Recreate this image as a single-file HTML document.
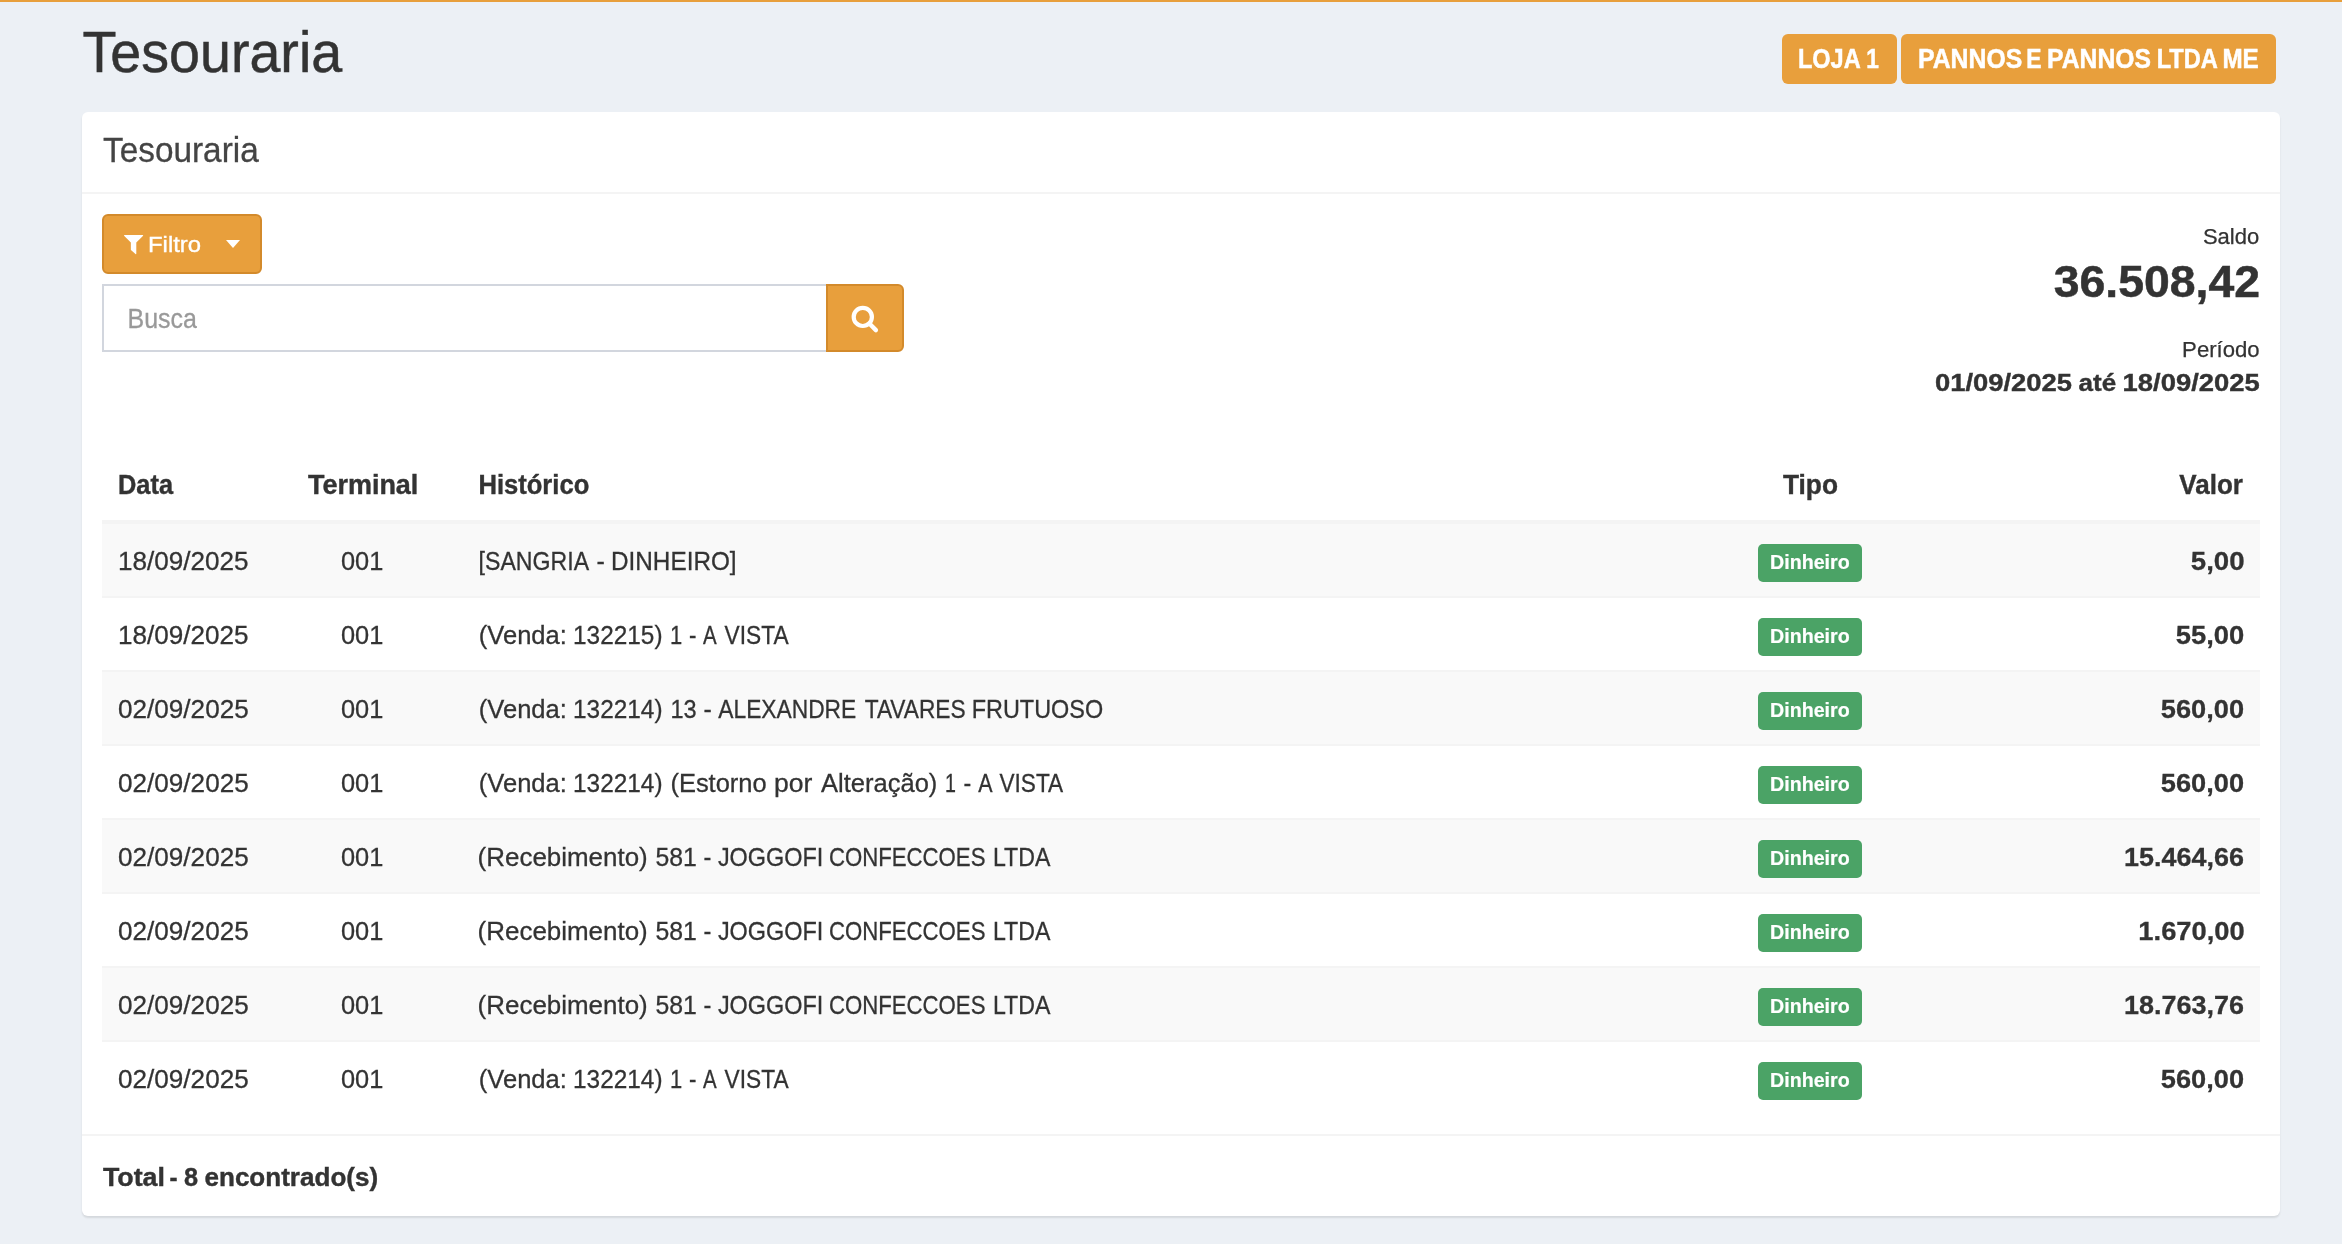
<!DOCTYPE html>
<html lang="pt-br"><head><meta charset="utf-8"><title>Tesouraria</title>
<style>
*{box-sizing:border-box}
html,body{margin:0;padding:0}
body{width:2342px;height:1244px;overflow:hidden;background:#ecf0f5;color:#333;
 font-family:"Liberation Sans",sans-serif;font-size:26.5px;position:relative}
.page{position:absolute;left:0;top:0;width:2342px;height:1244px;will-change:transform}
.sx{display:inline-block;white-space:nowrap}
.topbar{position:absolute;left:0;top:0;width:2342px;height:2px;background:#e89f3c}
h1.page-title{-webkit-text-stroke:0.5px #333;position:absolute;left:82px;top:17px;margin:0;font-weight:400;font-size:58px;line-height:70px;color:#333}
.labels{position:absolute;top:34px;left:1782px;height:50px;white-space:nowrap}
.label{position:absolute;top:0;height:50px;border-radius:6px;-webkit-text-stroke:0.5px #fff;background:#e89f3c;color:#fff;font-weight:700;
 font-size:27.5px;line-height:50px;text-align:center}
.card{position:absolute;left:82px;top:112px;width:2198px;height:1104px;background:#fff;border-radius:6px;
 box-shadow:0 2px 2px rgba(0,0,0,0.1)}
.card-header{position:absolute;left:0;top:0;width:100%;height:82px;border-bottom:2px solid #f4f4f4}
.card-header h3{-webkit-text-stroke:0.3px #444;position:absolute;left:20px;top:14px;margin:0;font-weight:400;font-size:34.5px;line-height:48px;color:#444}
.btn-filtro{position:absolute;left:20px;top:102px;width:160px;height:60px;background:#e89f3c;border:2px solid #d38a2b;
 border-radius:6px;color:#fff;font-size:22.5px;line-height:56px}
.btn-filtro svg.funnel{position:absolute;left:20px;top:18.9px}
.btn-filtro .txt{position:absolute;left:45px;top:1px;-webkit-text-stroke:0.35px #fff}
.btn-filtro .caret{position:absolute;left:122px;top:24px;width:0;height:0;border-left:7.5px solid transparent;border-right:7.5px solid transparent;border-top:8px solid #fff}
.search{position:absolute;left:20px;top:172px;width:802px;height:68px}
.search .input{position:absolute;left:0;top:0;width:726px;height:68px;border:2px solid #d2d6de;border-right:0;background:#fff;
 color:#999;-webkit-text-stroke:0.3px #999;font-size:27.5px;line-height:66px;padding-left:24px}
.search .btn{position:absolute;left:724px;top:0;width:78px;height:68px;background:#e89f3c;border:2px solid #d38a2b;
 border-radius:0 6px 6px 0}
.search .btn svg{position:absolute;left:22px;top:18px}
.summary{position:absolute;right:20px;top:102px;width:500px;text-align:right}
.summary div{position:absolute;right:0;white-space:nowrap}
.summary .l1{-webkit-text-stroke:0.25px #333;top:10px;font-size:21.2px;line-height:26px}
.summary .v1{-webkit-text-stroke:0.5px #333;top:41px;font-size:44.4px;line-height:54px;font-weight:700}
.summary .l2{-webkit-text-stroke:0.25px #333;top:123px;font-size:21.2px;line-height:26px}
.summary .v2{-webkit-text-stroke:0.4px #333;top:154px;font-size:24.8px;line-height:30px;font-weight:700}
table{position:absolute;left:20px;top:336px;width:2158px;border-collapse:separate;border-spacing:0;table-layout:fixed}
th{-webkit-text-stroke:0.4px #333;height:76px;border-bottom:4px solid #f4f4f4;font-weight:700;font-size:27.2px;padding:2px 16px 0;text-align:left;vertical-align:middle;line-height:40px}
td{-webkit-text-stroke:0.3px #333;height:74px;border-top:2px solid #f4f4f4;padding:1px 16px 0;vertical-align:middle;line-height:40px;font-size:26.5px;white-space:nowrap}
tbody tr:first-child td{height:72px;border-top:0}
tbody tr:nth-child(odd) td{background:#f9f9f9}
.c{text-align:center} .r{text-align:right}
th.c,td.c{text-align:center} th.r,td.r{text-align:right}
td.r{font-weight:700;-webkit-text-stroke:0.3px #333}
.badge{-webkit-text-stroke:0.2px #fff;display:inline-block;width:104px;height:38px;border-radius:5px;background:#4ba366;color:#fff;font-weight:700;
 font-size:20.4px;line-height:37px;text-align:center;vertical-align:middle;position:relative;top:1px}
.card-footer{-webkit-text-stroke:0.4px #333;position:absolute;left:0;top:1022px;width:100%;height:82px;border-top:2px solid #f4f4f4;
 font-weight:700;font-size:26px;line-height:40px;padding:21px 20px 0}
</style></head><body>
<div class="page">
<div class="topbar"></div>
<h1 class="page-title"><span class="sx" id="pt" style="transform:translate(0.5px,0.0px) scaleX(0.9589);transform-origin:0 50%">Tesouraria</span></h1>
<div class="labels"><span class="label" style="left:0;width:115px"><span class="sx" id="lab1w0" style="transform:translate(6.9px,0.0px) scaleX(0.8567);transform-origin:0 50%">LOJA</span> <span class="sx" id="lab1w1" style="transform:translate(-5.7px,0.0px) scaleX(0.8245);transform-origin:0 50%">1</span></span><span class="label" style="left:119px;width:375px"><span class="sx" id="lab2w0" style="transform:translate(17.0px,0.0px) scaleX(0.9017);transform-origin:0 50%">PANNOS</span> <span class="sx" id="lab2w1" style="transform:translate(2.2px,0.0px) scaleX(0.8306);transform-origin:0 50%">E</span> <span class="sx" id="lab2w2" style="transform:translate(-2.9px,0.0px) scaleX(0.8975);transform-origin:0 50%">PANNOS</span> <span class="sx" id="lab2w3" style="transform:translate(-17.3px,0.0px) scaleX(0.8589);transform-origin:0 50%">LTDA</span> <span class="sx" id="lab2w4" style="transform:translate(-29.6px,0.0px) scaleX(0.8810);transform-origin:0 50%">ME</span></span></div>
<section class="card">
<div class="card-header"><h3><span class="sx" id="bt" style="transform:translate(1.0px,0.0px) scaleX(0.9669);transform-origin:0 50%">Tesouraria</span></h3></div>
<div class="btn-filtro"><svg class="funnel" width="20" height="20" viewBox="0 0 20 20"><path d="M0.7 0H18.5Q19.7 0 18.9 1L12.3 7.6V18.5Q12.3 19.5 11.5 18.9L7.2 15.3Q6.85 15 6.85 14.5V7.6L0.3 1Q-0.5 0 0.7 0Z" fill="#fff"/></svg><span class="txt"><span class="sx" id="filtro" style="transform:translate(-1.0px,0.0px) scaleX(1.0611);transform-origin:0 50%">Filtro</span></span><span class="caret"></span></div>
<div class="search"><div class="input"><span class="sx" id="busca" style="transform:translate(-0.5px,0.0px) scaleX(0.9083);transform-origin:0 50%">Busca</span></div><div class="btn"><svg width="30" height="30" viewBox="0 0 30 30"><circle cx="12.8" cy="12.9" r="9.1" fill="none" stroke="#fff" stroke-width="4.2"/><path d="M19.6 19.8L25.9 26.1" stroke="#fff" stroke-width="4.4" stroke-linecap="round"/></svg></div></div>
<div class="summary"><div class="l1"><span class="sx" id="saldo" style="transform:translate(-1.0px,0.0px) scaleX(1.0392);transform-origin:100% 50%">Saldo</span></div><div class="v1"><span class="sx" id="saldov" style="transform:translate(-0.5px,0.0px) scaleX(1.0447);transform-origin:100% 50%">36.508,42</span></div><div class="l2"><span class="sx" id="periodo" style="transform:translate(-0.6px,0.0px) scaleX(1.0442);transform-origin:100% 50%">Período</span></div><div class="v2"><span class="sx" id="periodovw0" style="transform:translate(-27.0px,0.0px) scaleX(1.1036);transform-origin:0 50%">01/09/2025</span> <span class="sx" id="periodovw1" style="transform:translate(-14.4px,0.0px) scaleX(1.0498);transform-origin:0 50%">até</span> <span class="sx" id="periodovw2" style="transform:translate(-13.4px,0.0px) scaleX(1.1045);transform-origin:0 50%">18/09/2025</span></div></div>
<table><colgroup><col style="width:162px"><col style="width:197px"><col style="width:1232px"><col style="width:234px"><col style="width:333px"></colgroup>
<thead><tr><th><span class="sx" id="thdata" style="transform:scaleX(0.9340);transform-origin:0 50%">Data</span></th><th class="c"><span class="sx" id="thterm" style="transform:translate(0.5px,0.0px) scaleX(0.9917);transform-origin:50% 50%">Terminal</span></th><th><span class="sx" id="thhist" style="transform:translate(1.4px,0.0px) scaleX(0.9412);transform-origin:0 50%">Histórico</span></th><th class="c"><span class="sx" id="thtipo" style="transform:scaleX(0.9671);transform-origin:50% 50%">Tipo</span></th><th class="r"><span class="sx" id="thvalor" style="transform:translate(-1.5px,0.0px) scaleX(0.9568);transform-origin:100% 50%">Valor</span></th></tr></thead><tbody>
<tr><td><span class="sx" id="d0" style="transform:scaleX(0.9840);transform-origin:0 50%">18/09/2025</span></td><td class="c"><span class="sx" id="t0" style="transform:scaleX(0.9577);transform-origin:50% 50%">001</span></td><td><span class="sx" id="hs0w0" style="transform:translate(1.6px,0.0px) scaleX(0.8723);transform-origin:0 50%">[SANGRIA</span> <span class="sx" id="hs0w1" style="transform:translate(-14.6px,0.0px) scaleX(0.9437);transform-origin:0 50%">-</span> <span class="sx" id="hs0w2" style="transform:translate(-16.0px,0.0px) scaleX(0.9174);transform-origin:0 50%">DINHEIRO]</span></td><td class="c"><span class="badge"><span class="sx" id="b0" style="transform:translate(-0.5px,0.0px) scaleX(0.9639);transform-origin:50% 50%">Dinheiro</span></span></td><td class="r"><span class="sx" id="v0" style="transform:translate(1.0px,0.0px) scaleX(1.0419);transform-origin:100% 50%">5,00</span></td></tr>
<tr><td><span class="sx" id="d1" style="transform:scaleX(0.9840);transform-origin:0 50%">18/09/2025</span></td><td class="c"><span class="sx" id="t1" style="transform:scaleX(0.9577);transform-origin:50% 50%">001</span></td><td><span class="sx" id="hs1w0" style="transform:translate(1.8px,0.0px) scaleX(0.9637);transform-origin:0 50%">(Venda:</span> <span class="sx" id="hs1w1" style="transform:translate(-3.0px,0.0px) scaleX(0.9204);transform-origin:0 50%">132215)</span> <span class="sx" id="hs1w2" style="transform:translate(-9.9px,0.0px) scaleX(0.8303);transform-origin:0 50%">1</span> <span class="sx" id="hs1w3" style="transform:translate(-13.9px,0.0px) scaleX(0.8430);transform-origin:0 50%">-</span> <span class="sx" id="hs1w4" style="transform:translate(-15.9px,0.0px) scaleX(0.7729);transform-origin:0 50%">A</span> <span class="sx" id="hs1w5" style="transform:translate(-19.4px,0.0px) scaleX(0.8579);transform-origin:0 50%">VISTA</span></td><td class="c"><span class="badge"><span class="sx" id="b1" style="transform:translate(-0.5px,0.0px) scaleX(0.9639);transform-origin:50% 50%">Dinheiro</span></span></td><td class="r"><span class="sx" id="v1" style="transform:scaleX(1.0334);transform-origin:100% 50%">55,00</span></td></tr>
<tr><td><span class="sx" id="d2" style="transform:scaleX(0.9856);transform-origin:0 50%">02/09/2025</span></td><td class="c"><span class="sx" id="t2" style="transform:scaleX(0.9577);transform-origin:50% 50%">001</span></td><td><span class="sx" id="hs2w0" style="transform:translate(1.8px,0.0px) scaleX(0.9637);transform-origin:0 50%">(Venda:</span> <span class="sx" id="hs2w1" style="transform:translate(-3.0px,0.0px) scaleX(0.9204);transform-origin:0 50%">132214)</span> <span class="sx" id="hs2w2" style="transform:translate(-9.5px,0.0px) scaleX(0.8889);transform-origin:0 50%">13</span> <span class="sx" id="hs2w3" style="transform:translate(-13.5px,0.0px) scaleX(0.9388);transform-origin:0 50%">-</span> <span class="sx" id="hs2w4" style="transform:translate(-14.7px,0.0px) scaleX(0.8590);transform-origin:0 50%">ALEXANDRE</span> <span class="sx" id="hs2w5" style="transform:translate(-36.3px,0.0px) scaleX(0.8565);transform-origin:0 50%">TAVARES</span> <span class="sx" id="hs2w6" style="transform:translate(-55.3px,0.0px) scaleX(0.8838);transform-origin:0 50%">FRUTUOSO</span></td><td class="c"><span class="badge"><span class="sx" id="b2" style="transform:translate(-0.5px,0.0px) scaleX(0.9639);transform-origin:50% 50%">Dinheiro</span></span></td><td class="r"><span class="sx" id="v2" style="transform:scaleX(1.0267);transform-origin:100% 50%">560,00</span></td></tr>
<tr><td><span class="sx" id="d3" style="transform:scaleX(0.9856);transform-origin:0 50%">02/09/2025</span></td><td class="c"><span class="sx" id="t3" style="transform:scaleX(0.9577);transform-origin:50% 50%">001</span></td><td><span class="sx" id="hs3w0" style="transform:translate(1.8px,0.0px) scaleX(0.9637);transform-origin:0 50%">(Venda:</span> <span class="sx" id="hs3w1" style="transform:translate(-3.0px,0.0px) scaleX(0.9204);transform-origin:0 50%">132214)</span> <span class="sx" id="hs3w2" style="transform:translate(-9.6px,0.0px) scaleX(0.9614);transform-origin:0 50%">(Estorno</span> <span class="sx" id="hs3w3" style="transform:translate(-14.0px,0.0px) scaleX(1.0015);transform-origin:0 50%">por</span> <span class="sx" id="hs3w4" style="transform:translate(-13.0px,0.0px) scaleX(0.9631);transform-origin:0 50%">Alteração)</span> <span class="sx" id="hs3w5" style="transform:translate(-16.9px,0.0px) scaleX(0.7419);transform-origin:0 50%">1</span> <span class="sx" id="hs3w6" style="transform:translate(-20.6px,0.0px) scaleX(0.8760);transform-origin:0 50%">-</span> <span class="sx" id="hs3w7" style="transform:translate(-21.8px,0.0px) scaleX(0.8083);transform-origin:0 50%">A</span> <span class="sx" id="hs3w8" style="transform:translate(-25.5px,0.0px) scaleX(0.8537);transform-origin:0 50%">VISTA</span></td><td class="c"><span class="badge"><span class="sx" id="b3" style="transform:translate(-0.5px,0.0px) scaleX(0.9639);transform-origin:50% 50%">Dinheiro</span></span></td><td class="r"><span class="sx" id="v3" style="transform:scaleX(1.0267);transform-origin:100% 50%">560,00</span></td></tr>
<tr><td><span class="sx" id="d4" style="transform:scaleX(0.9856);transform-origin:0 50%">02/09/2025</span></td><td class="c"><span class="sx" id="t4" style="transform:scaleX(0.9577);transform-origin:50% 50%">001</span></td><td><span class="sx" id="hs4w0" style="transform:translate(0.6px,0.0px) scaleX(0.9790);transform-origin:0 50%">(Recebimento)</span> <span class="sx" id="hs4w1" style="transform:translate(-2.6px,0.0px) scaleX(0.9352);transform-origin:0 50%">581</span> <span class="sx" id="hs4w2" style="transform:translate(-6.4px,0.0px) scaleX(0.8910);transform-origin:0 50%">-</span> <span class="sx" id="hs4w3" style="transform:translate(-8.1px,0.0px) scaleX(0.8841);transform-origin:0 50%">JOGGOFI</span> <span class="sx" id="hs4w4" style="transform:translate(-24.1px,0.0px) scaleX(0.8372);transform-origin:0 50%">CONFECCOES</span> <span class="sx" id="hs4w5" style="transform:translate(-54.1px,0.0px) scaleX(0.8729);transform-origin:0 50%">LTDA</span></td><td class="c"><span class="badge"><span class="sx" id="b4" style="transform:translate(-0.5px,0.0px) scaleX(0.9639);transform-origin:50% 50%">Dinheiro</span></span></td><td class="r"><span class="sx" id="v4" style="transform:scaleX(1.0169);transform-origin:100% 50%">15.464,66</span></td></tr>
<tr><td><span class="sx" id="d5" style="transform:scaleX(0.9856);transform-origin:0 50%">02/09/2025</span></td><td class="c"><span class="sx" id="t5" style="transform:scaleX(0.9577);transform-origin:50% 50%">001</span></td><td><span class="sx" id="hs5w0" style="transform:translate(0.6px,0.0px) scaleX(0.9791);transform-origin:0 50%">(Recebimento)</span> <span class="sx" id="hs5w1" style="transform:translate(-2.6px,0.0px) scaleX(0.9352);transform-origin:0 50%">581</span> <span class="sx" id="hs5w2" style="transform:translate(-6.4px,0.0px) scaleX(0.8910);transform-origin:0 50%">-</span> <span class="sx" id="hs5w3" style="transform:translate(-8.1px,0.0px) scaleX(0.8841);transform-origin:0 50%">JOGGOFI</span> <span class="sx" id="hs5w4" style="transform:translate(-24.1px,0.0px) scaleX(0.8372);transform-origin:0 50%">CONFECCOES</span> <span class="sx" id="hs5w5" style="transform:translate(-54.1px,0.0px) scaleX(0.8729);transform-origin:0 50%">LTDA</span></td><td class="c"><span class="badge"><span class="sx" id="b5" style="transform:translate(-0.5px,0.0px) scaleX(0.9639);transform-origin:50% 50%">Dinheiro</span></span></td><td class="r"><span class="sx" id="v5" style="transform:translate(0.5px,0.0px) scaleX(1.0305);transform-origin:100% 50%">1.670,00</span></td></tr>
<tr><td><span class="sx" id="d6" style="transform:scaleX(0.9856);transform-origin:0 50%">02/09/2025</span></td><td class="c"><span class="sx" id="t6" style="transform:scaleX(0.9577);transform-origin:50% 50%">001</span></td><td><span class="sx" id="hs6w0" style="transform:translate(0.6px,0.0px) scaleX(0.9790);transform-origin:0 50%">(Recebimento)</span> <span class="sx" id="hs6w1" style="transform:translate(-2.6px,0.0px) scaleX(0.9352);transform-origin:0 50%">581</span> <span class="sx" id="hs6w2" style="transform:translate(-6.4px,0.0px) scaleX(0.8910);transform-origin:0 50%">-</span> <span class="sx" id="hs6w3" style="transform:translate(-8.1px,0.0px) scaleX(0.8841);transform-origin:0 50%">JOGGOFI</span> <span class="sx" id="hs6w4" style="transform:translate(-24.1px,0.0px) scaleX(0.8372);transform-origin:0 50%">CONFECCOES</span> <span class="sx" id="hs6w5" style="transform:translate(-54.1px,0.0px) scaleX(0.8729);transform-origin:0 50%">LTDA</span></td><td class="c"><span class="badge"><span class="sx" id="b6" style="transform:translate(-0.5px,0.0px) scaleX(0.9639);transform-origin:50% 50%">Dinheiro</span></span></td><td class="r"><span class="sx" id="v6" style="transform:scaleX(1.0169);transform-origin:100% 50%">18.763,76</span></td></tr>
<tr><td><span class="sx" id="d7" style="transform:scaleX(0.9856);transform-origin:0 50%">02/09/2025</span></td><td class="c"><span class="sx" id="t7" style="transform:scaleX(0.9577);transform-origin:50% 50%">001</span></td><td><span class="sx" id="hs7w0" style="transform:translate(1.8px,0.0px) scaleX(0.9637);transform-origin:0 50%">(Venda:</span> <span class="sx" id="hs7w1" style="transform:translate(-3.0px,0.0px) scaleX(0.9204);transform-origin:0 50%">132214)</span> <span class="sx" id="hs7w2" style="transform:translate(-9.9px,0.0px) scaleX(0.8303);transform-origin:0 50%">1</span> <span class="sx" id="hs7w3" style="transform:translate(-13.9px,0.0px) scaleX(0.8430);transform-origin:0 50%">-</span> <span class="sx" id="hs7w4" style="transform:translate(-15.9px,0.0px) scaleX(0.7729);transform-origin:0 50%">A</span> <span class="sx" id="hs7w5" style="transform:translate(-19.4px,0.0px) scaleX(0.8579);transform-origin:0 50%">VISTA</span></td><td class="c"><span class="badge"><span class="sx" id="b7" style="transform:translate(-0.5px,0.0px) scaleX(0.9639);transform-origin:50% 50%">Dinheiro</span></span></td><td class="r"><span class="sx" id="v7" style="transform:scaleX(1.0267);transform-origin:100% 50%">560,00</span></td></tr>
</tbody></table>
<div class="card-footer"><span class="sx" id="footw0" style="transform:translate(0.9px,0.0px) scaleX(1.0313);transform-origin:0 50%">Total</span> <span class="sx" id="footw1" style="transform:translate(0.4px,0.0px) scaleX(0.9255);transform-origin:0 50%">-</span> <span class="sx" id="footw2" style="transform:translate(-0.9px,0.0px) scaleX(0.9726);transform-origin:0 50%">8</span> <span class="sx" id="footw3" style="transform:translate(-2.5px,0.0px) scaleX(1.0016);transform-origin:0 50%">encontrado(s)</span></div>
</section></div></body></html>
